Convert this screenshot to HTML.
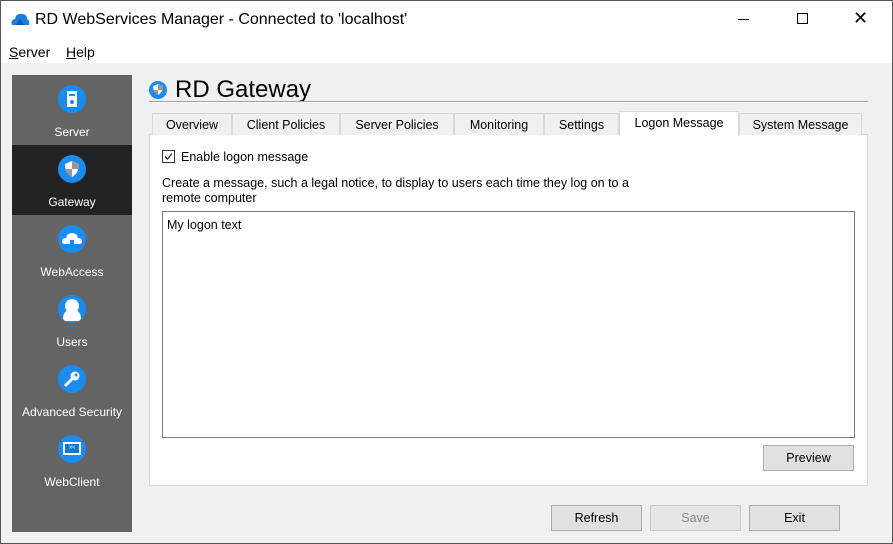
<!DOCTYPE html>
<html><head><style>
*{margin:0;padding:0;box-sizing:border-box}
body{width:893px;height:544px;position:relative;overflow:hidden;font-family:"Liberation Sans",sans-serif;font-size:12px;color:#000;background:#f0f0f0}
.a{position:absolute}
.tab{position:absolute;top:113px;height:22px;border:1px solid #d9d9d9;border-bottom:none;background:#f0f0f0;text-align:center;line-height:22px;font-size:12.5px}
.btn{position:absolute;height:26px;border:1px solid #adadad;background:#e1e1e1;text-align:center;line-height:25px;font-size:12.5px}
.side{position:absolute;left:12px;width:120px;height:70px;text-align:center;color:#fff;font-size:12px}
.ic{position:absolute;left:46px;top:10px;width:28px;height:28px;border-radius:50%;background:#1a8cf0}
.side span{position:absolute;left:0;right:0;top:50px}
</style></head><body>
<div class="a" style="left:0;top:0;width:893px;height:63px;background:#fff"></div>
<div class="a" style="left:0;top:0;width:893px;height:544px;border:1px solid #555"></div>
<svg class="a" style="left:10px;top:11px" width="20" height="16"><path d="M2 14 Q0 9 5 8 Q6 2 12 3 Q17 3 17 8 Q20 9 19 14 Z" fill="#1a7fd8"/><path d="M6 14 L10 8 L14 14Z" fill="#0b5aa8"/></svg>
<div class="a" style="left:35px;top:11px;font-size:16px">RD WebServices Manager - Connected to 'localhost'</div>
<div class="a" style="left:738px;top:19px;width:11px;height:1px;background:#000"></div>
<div class="a" style="left:797px;top:13px;width:11px;height:11px;border:1px solid #000"></div>
<div class="a" style="left:853px;top:8px;font-size:18px;font-weight:300">✕</div>
<div class="a" style="left:9px;top:44px;font-size:14px"><u>S</u>erver</div>
<div class="a" style="left:66px;top:44px;font-size:14px"><u>H</u>elp</div>

<div class="a" style="left:12px;top:75px;width:120px;height:457px;background:#646464"></div>
<div class="side" style="top:75px"><div class="ic"><div class="a" style="left:9px;top:6px;width:10px;height:16px;background:#fff;border-radius:1px"></div><div class="a" style="left:11px;top:9px;width:6px;height:2px;background:#1a8cf0"></div><div class="a" style="left:12px;top:15px;width:4px;height:4px;border-radius:50%;background:#1a8cf0"></div></div><span>Server</span></div>
<div class="side" style="top:145px;background:#222"><div class="ic"><svg class="a" style="left:6px;top:6px" width="16" height="17"><path d="M8 0 L15 3 Q15 12 8 16 Q1 12 1 3Z" fill="#fff"/><path d="M8 0 L8 8 L15 8 Q15 4 15 3Z M1 8 L8 8 L8 16 Q2 12 1 8Z" fill="#999"/></svg></div><span>Gateway</span></div>
<div class="side" style="top:215px"><div class="ic"><svg class="a" style="left:4px;top:7px" width="20" height="14"><path d="M3 12 Q0 12 0 9 Q0 6 4 6 Q5 1 10 1 Q15 1 16 6 Q20 6 20 9 Q20 12 17 12Z" fill="#fff"/><rect x="8" y="8" width="4" height="6" fill="#1a8cf0"/></svg></div><span>WebAccess</span></div>
<div class="side" style="top:285px"><div class="ic"><div class="a" style="left:7px;top:4px;width:14px;height:14px;border-radius:50%;background:#fff"></div><div class="a" style="left:5px;top:14px;width:18px;height:12px;border-radius:9px 9px 3px 3px;background:#fff"></div></div><span>Users</span></div>
<div class="side" style="top:355px"><div class="ic"><svg class="a" style="left:5px;top:5px" width="18" height="18"><circle cx="12" cy="6" r="4.5" fill="#fff"/><path d="M10 8 L2 16" stroke="#fff" stroke-width="3"/><circle cx="13" cy="5" r="1.5" fill="#1a8cf0"/></svg></div><span>Advanced Security</span></div>
<div class="side" style="top:425px"><div class="ic"><div class="a" style="left:5px;top:7px;width:18px;height:13px;border:2px solid #fff;background:#1478d0"></div><div class="a" style="left:11px;top:9px;color:#fff;font-size:7px">»‹</div></div><span>WebClient</span></div>

<svg class="a" style="left:149px;top:81px" width="18" height="18"><circle cx="9" cy="9" r="9" fill="#1a8cf0"/><path d="M9 3 L14 5 Q14 11 9 14 Q4 11 4 5Z" fill="#fff"/><path d="M9 3 L9 9 L14 9 Q14 6 14 5Z M4 9 L9 9 L9 14 Q5 12 4 9Z" fill="#999"/></svg>
<div class="a" style="left:175px;top:76px;font-size:24px">RD Gateway</div>
<div class="a" style="left:149px;top:101px;width:719px;height:2px;border-top:1px solid #a0a0a0;border-bottom:1px solid #fff"></div>

<div class="a" style="left:149px;top:134px;width:719px;height:352px;background:#fff;border:1px solid #d9d9d9"></div>
<div class="tab" style="left:152px;width:80px">Overview</div>
<div class="tab" style="left:232px;width:108px">Client Policies</div>
<div class="tab" style="left:340px;width:114px">Server Policies</div>
<div class="tab" style="left:454px;width:90px">Monitoring</div>
<div class="tab" style="left:544px;width:75px">Settings</div>
<div class="tab" style="left:619px;top:111px;height:25px;width:120px;background:#fff;line-height:23px">Logon Message</div>
<div class="tab" style="left:739px;width:123px">System Message</div>

<div class="a" style="left:162px;top:150px;width:13px;height:13px;border:1px solid #333;background:#fff"><svg width="11" height="11" style="position:absolute;left:0;top:0"><path d="M2 5.5 L4.5 8 L9 2.5" stroke="#333" stroke-width="1.3" fill="none"/></svg></div>
<div class="a" style="left:181px;top:150px;font-size:12.5px">Enable logon message</div>
<div class="a" style="left:162px;top:176px;font-size:12.5px;line-height:15px">Create a message, such a legal notice, to display to users each time they log on to a<br>remote computer</div>
<div class="a" style="left:162px;top:211px;width:693px;height:227px;border:1px solid #7a7a7a;background:#fff"></div>
<div class="a" style="left:167px;top:218px;font-size:12.5px">My logon text</div>
<div class="btn" style="left:763px;top:445px;width:91px">Preview</div>
<div class="btn" style="left:551px;top:505px;width:91px">Refresh</div>
<div class="btn" style="left:650px;top:505px;width:91px;color:#888;border-color:#c8c8c8;background:#e6e6e6">Save</div>
<div class="btn" style="left:749px;top:505px;width:91px">Exit</div>
</body></html>
